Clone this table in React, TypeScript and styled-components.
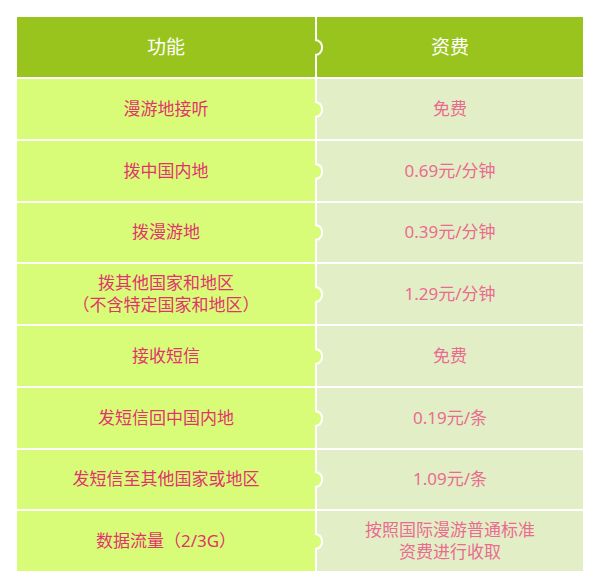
import React from "react";
import styled, { createGlobalStyle } from "styled-components";

const GlobalStyle = createGlobalStyle`
  html, body {
    margin: 0;
    padding: 0;
    background: #ffffff;
  }
  body {
    font-family: "Noto Sans", "Noto Sans CJK SC", sans-serif;
  }
`;

const HEADER_GREEN = "#99c41e";
const LEFT_GREEN = "#d9fc78";
const RIGHT_GREEN = "#e2efc6";

const Page = styled.div`
  padding: 17px;
  width: 600px;
  height: 588px;
  box-sizing: border-box;
`;

const Table = styled.div`
  display: grid;
  grid-template-columns: 298px 266px;
  grid-template-rows: 60px repeat(8, 59.75px);
  gap: 2px;
  width: 566px;
  background: #ffffff;
`;

const Cell = styled.div<{ $bg: string; $color: string; $size: number; $bump?: boolean }>`
  position: relative;
  z-index: ${(p) => (p.$bump ? 1 : 0)};
  display: flex;
  align-items: center;
  justify-content: center;
  text-align: center;
  background: ${(p) => p.$bg};
  color: ${(p) => p.$color};
  font-size: ${(p) => p.$size}px;
  font-weight: 400;
  line-height: 22px;

  ${(p) =>
    p.$bump &&
    `
    &::after {
      content: "";
      position: absolute;
      left: 100%;
      top: 50%;
      width: 6px;
      height: 13px;
      margin-top: -8px;
      background: ${p.$bg};
      border: 2px solid #ffffff;
      border-left: none;
      border-radius: 0 9px 9px 0;
    }
  `}
`;

type Row = { name: React.ReactNode; fee: React.ReactNode };

const rows: Row[] = [
  { name: "漫游地接听", fee: "免费" },
  { name: "拨中国内地", fee: "0.69元/分钟" },
  { name: "拨漫游地", fee: "0.39元/分钟" },
  {
    name: (
      <>
        拨其他国家和地区
        <br />
        （不含特定国家和地区）
      </>
    ),
    fee: "1.29元/分钟",
  },
  { name: "接收短信", fee: "免费" },
  { name: "发短信回中国内地", fee: "0.19元/条" },
  { name: "发短信至其他国家或地区", fee: "1.09元/条" },
  {
    name: "数据流量（2/3G）",
    fee: (
      <>
        按照国际漫游普通标准
        <br />
        资费进行收取
      </>
    ),
  },
];

export default function App() {
  return (
    <Page>
      <GlobalStyle />
      <Table>
        <Cell $bg={HEADER_GREEN} $color="#ffffff" $size={19} $bump>
          功能
        </Cell>
        <Cell $bg={HEADER_GREEN} $color="#ffffff" $size={19}>
          资费
        </Cell>
        {rows.map((r, i) => (
          <React.Fragment key={i}>
            <Cell $bg={LEFT_GREEN} $color="#e2346c" $size={17} $bump>
              {r.name}
            </Cell>
            <Cell $bg={RIGHT_GREEN} $color="#eb6b90" $size={17}>
              {r.fee}
            </Cell>
          </React.Fragment>
        ))}
      </Table>
    </Page>
  );
}
